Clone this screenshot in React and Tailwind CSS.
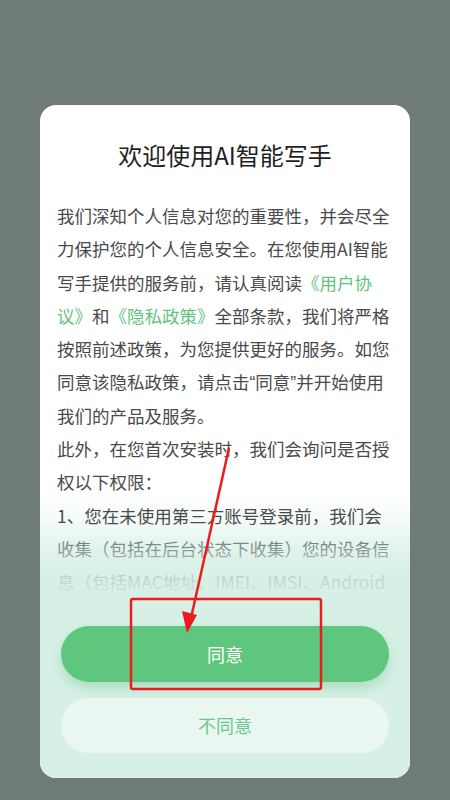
export default function App() {
  const q = "font-['Liberation_Sans',sans-serif] leading-none";
  const lines = [
    <>我们深知个人信息对您的重要性，并会尽全</>,
    <>力保护您的个人信息安全。在您使用AI智能</>,
    <>
      写手提供的服务前，请认真阅读<span className="text-[#5fc47e]">《用户协</span>
    </>,
    <>
      <span className="text-[#5fc47e]">议》</span>和
      <span className="text-[#5fc47e]">《隐私政策》</span>全部条款，我们将严格
    </>,
    <>按照前述政策，为您提供更好的服务。如您</>,
    <>
      同意该隐私政策，请点击<span className={q}>“</span>同意<span className={q}>”</span>并开始使用
    </>,
    <>我们的产品及服务。</>,
    <>此外，在您首次安装时，我们会询问是否授</>,
    <>权以下权限：</>,
    <>1、您在未使用第三方账号登录前，我们会</>,
    <>收集（包括在后台状态下收集）您的设备信</>,
    <>息（包括MAC地址、IMEI、IMSI、Android</>,
  ];

  return (
    <div className="relative w-[450px] h-[800px] overflow-hidden bg-[#6f7c76] font-['Noto_Sans_CJK_SC','Liberation_Sans',sans-serif]">
      <div className="flex justify-center pt-[105px]">
        {/* DIALOG */}
        <div className="w-[370px] rounded-[16px] bg-white overflow-hidden flex flex-col">
          <h1 className="pt-[34px] text-center text-[24px] leading-[32px] text-[#1f1f1f]">
            欢迎使用AI智能写手
          </h1>

          {/* BODY */}
          <div className="relative mt-[28px] h-[407px] overflow-hidden px-[17px]">
            <div className="absolute inset-x-0 bottom-0 h-[115px] bg-linear-to-b from-white to-[#d6f0e6]" />
            <div className="relative">
              {lines.map((line, i) => (
                <div
                  key={i}
                  className="h-[33.3px] whitespace-nowrap text-[17.5px] leading-[33.3px] text-[#4a4a4a]"
                >
                  {line}
                </div>
              ))}
            </div>
            <div className="absolute inset-x-0 bottom-0 h-[82px] bg-linear-to-b from-[#d6f0e6]/0 via-[#d6f0e6]/75 to-[#d6f0e6]" />
          </div>

          {/* BUTTONS */}
          <div className="flex flex-col gap-[16px] bg-[#d6f0e6] px-[21px] pt-[20px] pb-[25px]">
            <button className="h-[56px] rounded-full bg-[#5fc67e] text-[18px] text-white shadow-[0_6px_12px_rgba(80,180,110,0.3)]">
              同意
            </button>
            <button className="h-[55px] rounded-full bg-[#eaf7f1] text-[18px] text-[#6cc88c]">
              不同意
            </button>
          </div>
        </div>
      </div>

      {/* ANNOTATION */}
      <svg
        className="absolute inset-0 pointer-events-none"
        width="450"
        height="800"
        viewBox="0 0 450 800"
      >
        <rect
          x="131"
          y="599"
          width="190"
          height="90"
          rx="2"
          fill="none"
          stroke="#ec1c1c"
          strokeWidth="2.5"
        />
        <line x1="229" y1="448" x2="191" y2="618" stroke="#ec1c1c" strokeWidth="2.5" />
        <polygon points="187,633 182,611 197,615" fill="#ec1c1c" />
      </svg>
    </div>
  );
}
